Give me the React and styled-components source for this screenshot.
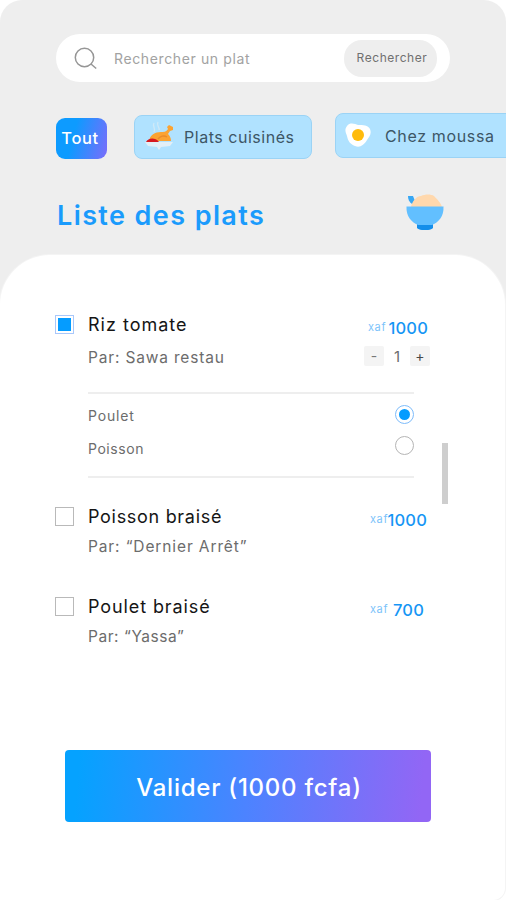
import React, { useState } from "react";
import styled, { createGlobalStyle } from "styled-components";

const GlobalStyle = createGlobalStyle`
  * {
    box-sizing: border-box;
  }

  body {
    margin: 0;
    background: #ffffff;
    font-family: Inter, "Liberation Sans", sans-serif;
  }

  button, input {
    font-family: inherit;
  }
`;

// Layout
const Screen = styled.div`
  width: 506px;
  height: 900px;
  overflow: hidden;
  border-radius: 22px 22px 0 0;
  background: linear-gradient(#eeeeee 330px, #ffffff 330px);
  display: flex;
  flex-direction: column;
`;

const Header = styled.header`
  height: 255px;
  flex: none;
  padding: 34px 0 0 56px;
`;

const Panel = styled.main`
  position: relative;
  flex: 1;
  width: 505px;
  padding: 59px 75px 0 55px;
  background: #ffffff;
  border-radius: 50px 50px 12px 0;
  box-shadow: 0 0 0 1px #f4f4f4;
`;

// Search bar
const SearchBar = styled.div`
  width: 394px;
  height: 48px;
  padding: 0 13px 0 18px;
  display: flex;
  align-items: center;
  border-radius: 24px;
  background: #ffffff;
`;

const SearchInput = styled.input`
  flex: 1;
  min-width: 0;
  margin-left: 16px;
  padding: 1px 0 0;
  border: none;
  outline: none;
  background: transparent;
  font-size: 14px;
  letter-spacing: 0.62px;

  &::placeholder {
    color: #a2a2a2;
    opacity: 1;
  }
`;

const SearchButton = styled.button`
  width: 93px;
  height: 37px;
  padding: 0 0 1px 3px;
  border: none;
  border-radius: 18px;
  background: #eeeeee;
  color: #707070;
  font-size: 12px;
  letter-spacing: 0.55px;
`;

// Filters
const Filters = styled.div`
  display: flex;
  margin-top: 31px;
  height: 46px;
`;

const AllFilter = styled.button`
  flex: none;
  width: 51px;
  height: 41px;
  margin: 5px 27px 0 0;
  padding: 0 3px 1px 0;
  border: none;
  border-radius: 9px;
  background: linear-gradient(105deg, #0d9bff 35%, #7b6cfb 100%);
  color: #ffffff;
  font-size: 16.5px;
  font-weight: 500;
  letter-spacing: 0.6px;
`;

const Filter = styled.button`
  flex: none;
  width: ${({ $width }) => $width}px;
  height: ${({ $height }) => $height}px;
  margin: ${({ $top }) => $top}px 23px 0 0;
  padding: 0 0 0 ${({ $left }) => $left}px;
  display: flex;
  align-items: center;
  gap: ${({ $gap }) => $gap}px;
  border: 1px solid #9bd3f5;
  border-radius: 8px;
  background: #b0e2ff;
  color: #3d5666;
  font-size: 16px;
  letter-spacing: ${({ $spacing }) => $spacing}px;
  white-space: nowrap;
`;

const TitleRow = styled.div`
  display: flex;
  justify-content: space-between;
  align-items: center;
  width: 388px;
  margin-top: 33px;
`;

const Title = styled.h1`
  margin: 8px 0 0 1px;
  color: #1a9bfc;
  font-size: 27px;
  line-height: 32px;
  font-weight: 600;
  letter-spacing: 1.4px;
  white-space: nowrap;
`;

// Dishes
const Dish = styled.section`
  display: grid;
  grid-template-columns: 19px 1fr auto;
  column-gap: 14px;
  height: ${({ $height }) => $height}px;
  align-content: start;
`;

const Checkbox = styled.button`
  width: 19px;
  height: 19px;
  margin: 1px 0 0;
  padding: 2px;
  border: 1px solid ${({ $checked }) => ($checked ? "#a9c8fb" : "#b9b9b9")};
  background: #ffffff;

  &::before {
    content: "";
    display: block;
    width: 13px;
    height: 13px;
    background: ${({ $checked }) => ($checked ? "#059cff" : "transparent")};
  }
`;

const DishName = styled.h2`
  margin: 0;
  color: #151515;
  font-size: 18px;
  line-height: 22px;
  font-weight: 400;
  letter-spacing: ${({ $spacing }) => $spacing}px;
  white-space: nowrap;
`;

const Seller = styled.p`
  grid-column: 2;
  margin: ${({ $top }) => $top}px 0 0;
  color: #6c6c6c;
  font-size: 15.5px;
  line-height: 22px;
  letter-spacing: ${({ $spacing }) => $spacing}px;
  white-space: nowrap;
`;

const Price = styled.div`
  display: flex;
  align-items: center;
  justify-content: space-between;
  justify-self: end;
  width: ${({ $width }) => $width}px;
  margin: 3px ${({ $right }) => $right}px 0 0;
  height: 22px;
  color: #1696f5;
  font-size: 16.5px;
  font-weight: 500;
  letter-spacing: 0.2px;
`;

const Currency = styled.span`
  width: 17px;
  margin-top: -3px;
  color: #7dc3fa;
  font-size: 11px;
  font-weight: 400;
  letter-spacing: 0.6px;
`;

const Stepper = styled.div`
  display: flex;
  justify-self: end;
  align-items: center;
  justify-content: space-between;
  width: 66px;
  height: 20px;
  margin-top: 7px;
  color: #6c6c6c;
  font-size: 15px;
`;

const StepButton = styled.button`
  width: 20px;
  height: 20px;
  padding: 0;
  border: none;
  border-radius: 2px;
  background: #f4f4f4;
  color: ${({ $muted }) => ($muted ? "#777777" : "#484848")};
  font-size: 14px;
  line-height: 20px;
`;

const Options = styled.div`
  grid-column: 2 / 4;
  width: 326px;
  height: 86px;
  margin-top: 23px;
  padding-top: 8px;
  border-top: 2px solid #eeeeee;
  border-bottom: 2px solid #eeeeee;
`;

const Option = styled.div`
  display: flex;
  justify-content: space-between;
  height: 31px;
  color: #6c6c6c;
  font-size: 14px;
  line-height: 28px;
  letter-spacing: ${({ $spacing }) => $spacing}px;
`;

const OptionLabel = styled.span`
  padding-top: ${({ $top }) => $top}px;
`;

const Radio = styled.button`
  width: 19px;
  height: 19px;
  margin-top: 3px;
  padding: 3px;
  border: 1px solid ${({ $checked }) => ($checked ? "#7ebcfb" : "#b5b5b5")};
  border-radius: 50%;
  background: #ffffff;

  &::before {
    content: "";
    display: block;
    width: 11px;
    height: 11px;
    border-radius: 50%;
    background: ${({ $checked }) => ($checked ? "#059cff" : "transparent")};
  }
`;

const ScrollThumb = styled.div`
  position: absolute;
  top: 188px;
  right: 57px;
  width: 6px;
  height: 61px;
  background: #cecece;
`;

const SubmitButton = styled.button`
  display: block;
  width: 366px;
  height: 72px;
  margin: 54px 0 0 10px;
  padding: 3px 0 0 2px;
  border: none;
  border-radius: 4px;
  background: linear-gradient(95deg, #05a2ff 4%, #4c83ff 50%, #9266f5 97%);
  color: #ffffff;
  font-size: 24px;
  font-weight: 500;
  letter-spacing: 0.75px;
`;

const SearchIcon = () => (
  <svg width="24" height="24" viewBox="0 -1 24 24" fill="none" stroke="#969696" strokeWidth="1.5">
    <circle cx="10.5" cy="10.5" r="9.2" />
    <path d="M17 17l5.2 4.5" />
  </svg>
);

const ChickenIcon = () => (
  <svg width="30" height="32" viewBox="0 0 30 32" fill="none">
    <path d="M9 2c-2 3 2 5 0 9M13 1c-2 4 2 5 1 8" stroke="#d0e9f7" strokeWidth="1.3" />
    <path d="M4 20c1-6 6-9 12-9 3 0 5 0 7-3l-1-2 2-2 4 2v3l-3 1-2 3c2 2 3 4 3 7z" fill="#fba332" />
    <path d="M13 18c2-3 6-4 9-2" stroke="#e98b2b" strokeWidth="1.5" />
    <path d="M1 21c2-4 9-5 13 0z" fill="#d71920" />
    <path d="M0 21h28l-3 4-9 1-2 3-2-3-9-1z" fill="#e2eff7" />
  </svg>
);

const EggIcon = () => (
  <svg width="26" height="25" viewBox="0 0 26 25">
    <path
      d="M2 3C5-1 10 1 13 2c5 0 10 0 12 4 2 5-1 8-3 11-3 5-7 8-12 6C5 21 3 18 2 13 1 10-1 7 2 3z"
      fill="#ffffff"
    />
    <circle cx="13" cy="12" r="6" fill="#ffbb0c" />
  </svg>
);

const BowlIcon = () => (
  <svg width="38" height="36" viewBox="0 0 38 36">
    <path d="M2 2h5l4 10-5-2C3 8 2 5 2 2z" fill="#37a7f4" />
    <path d="M5 13C6 8 10 2 15 2c4-2 10-2 13 0 3 3 7 7 8 11z" fill="#ffd8ad" />
    <path d="M11 28h16v6c-3 3-13 3-16 0z" fill="#148eea" />
    <path d="M0.5 12.5h37C38 22 33 28 26 31H12C5 28 0 22 .5 12.5z" fill="#62bfff" />
  </svg>
);

const App = () => {
  const [quantity, setQuantity] = useState(1);
  const [option, setOption] = useState("Poulet");

  return (
    <>
      <GlobalStyle />
      <Screen>
        <Header>
          <SearchBar>
            <SearchIcon />
            <SearchInput placeholder="Rechercher un plat" />
            <SearchButton>Rechercher</SearchButton>
          </SearchBar>

          <Filters>
            <AllFilter>Tout</AllFilter>
            <Filter $width={178} $height={44} $top={2} $left={10} $gap={9} $spacing={0.53}>
              <ChickenIcon />
              Plats cuisinés
            </Filter>
            <Filter $width={190} $height={45} $top={0} $left={9} $gap={14} $spacing={0.65}>
              <EggIcon />
              Chez moussa
            </Filter>
          </Filters>

          <TitleRow>
            <Title>Liste des plats</Title>
            <BowlIcon />
          </TitleRow>
        </Header>

        <Panel>
          <Dish $height={192}>
            <Checkbox $checked />
            <DishName $spacing={1}>Riz tomate</DishName>
            <Price $width={60} $right={2}>
              <Currency>xaf</Currency>1000
            </Price>
            <Seller $top={8} $spacing={0.83}>Par: Sawa restau</Seller>
            <Stepper>
              <StepButton $muted onClick={() => setQuantity(Math.max(0, quantity - 1))}>-</StepButton>
              {quantity}
              <StepButton onClick={() => setQuantity(quantity + 1)}>+</StepButton>
            </Stepper>
            <Options>
              <Option $spacing={0.85}>
                <OptionLabel $top={0}>Poulet</OptionLabel>
                <Radio $checked={option === "Poulet"} onClick={() => setOption("Poulet")} />
              </Option>
              <Option $spacing={0.55}>
                <OptionLabel $top={2}>Poisson</OptionLabel>
                <Radio $checked={option === "Poisson"} onClick={() => setOption("Poisson")} />
              </Option>
            </Options>
          </Dish>

          <Dish $height={90}>
            <Checkbox />
            <DishName $spacing={0.7}>Poisson braisé</DishName>
            <Price $width={57} $right={3}>
              <Currency>xaf</Currency>1000
            </Price>
            <Seller $top={5} $spacing={0.88}>Par: “Dernier Arrêt”</Seller>
          </Dish>

          <Dish $height={100}>
            <Checkbox />
            <DishName $spacing={0.9}>Poulet braisé</DishName>
            <Price $width={54} $right={6}>
              <Currency>xaf</Currency>700
            </Price>
            <Seller $top={5} $spacing={0.55}>Par: “Yassa”</Seller>
          </Dish>

          <SubmitButton>Valider (1000 fcfa)</SubmitButton>
          <ScrollThumb />
        </Panel>
      </Screen>
    </>
  );
};

export default App;
